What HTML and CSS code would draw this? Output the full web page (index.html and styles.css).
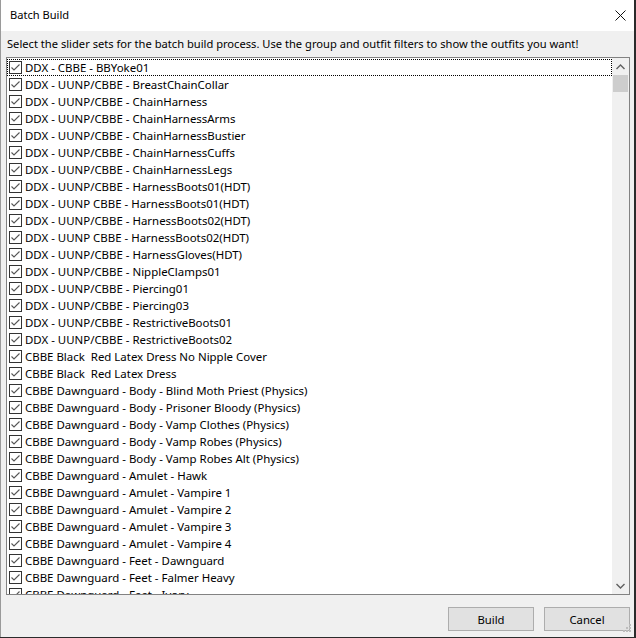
FILE: index.html
```html
<!DOCTYPE html>
<html>
<head>
<meta charset="utf-8">
<link rel="stylesheet" href="styles.css">
</head>
<body>
<div class="window">
  <div class="titlebar">
    <span class="title">Batch Build</span>
    <span class="close"><svg width="11" height="11" viewBox="0 0 11 11"><path d="M0.5 0.5L10.5 10.5M10.5 0.5L0.5 10.5" stroke="#111" stroke-width="1" fill="none"/></svg></span>
  </div>
  <div class="client">
    <div class="intro">Select the slider sets for the batch build process. Use the group and outfit filters to show the outfits you want!</div>
    <div class="listbox">
      <div class="rows" id="rows"></div>
      <div class="scrollbar">
        <div class="arrow"><svg width="9" height="6" viewBox="0 0 9 6"><path d="M0.5 5L4.5 1L8.5 5" stroke="#606060" stroke-width="1.4" fill="none"/></svg></div>
        <div class="thumb"></div>
        <div class="track"></div>
        <div class="arrow"><svg width="9" height="6" viewBox="0 0 9 6"><path d="M0.5 1L4.5 5L8.5 1" stroke="#606060" stroke-width="1.4" fill="none"/></svg></div>
      </div>
    </div>
    <div class="footer">
      <button class="btn">Build</button>
      <button class="btn">Cancel</button>
    </div>
  </div>
  <svg class="grip" width="12" height="12" viewBox="0 0 12 12">
    <rect x="9" y="0" width="2" height="2" fill="#bdbdbd"/>
    <rect x="6" y="3" width="2" height="2" fill="#bdbdbd"/>
    <rect x="9" y="3" width="2" height="2" fill="#bdbdbd"/>
    <rect x="3" y="6" width="2" height="2" fill="#bdbdbd"/>
    <rect x="6" y="6" width="2" height="2" fill="#bdbdbd"/>
    <rect x="9" y="6" width="2" height="2" fill="#bdbdbd"/>
  </svg>
</div>
<script src="script.js"></script>
</body>
</html>
```
FILE: script.js
```js
var items = [
"DDX - CBBE - BBYoke01",
"DDX - UUNP/CBBE - BreastChainCollar",
"DDX - UUNP/CBBE - ChainHarness",
"DDX - UUNP/CBBE - ChainHarnessArms",
"DDX - UUNP/CBBE - ChainHarnessBustier",
"DDX - UUNP/CBBE - ChainHarnessCuffs",
"DDX - UUNP/CBBE - ChainHarnessLegs",
"DDX - UUNP/CBBE - HarnessBoots01(HDT)",
"DDX - UUNP CBBE - HarnessBoots01(HDT)",
"DDX - UUNP/CBBE - HarnessBoots02(HDT)",
"DDX - UUNP CBBE - HarnessBoots02(HDT)",
"DDX - UUNP/CBBE - HarnessGloves(HDT)",
"DDX - UUNP/CBBE - NippleClamps01",
"DDX - UUNP/CBBE - Piercing01",
"DDX - UUNP/CBBE - Piercing03",
"DDX - UUNP/CBBE - RestrictiveBoots01",
"DDX - UUNP/CBBE - RestrictiveBoots02",
"CBBE Black  Red Latex Dress No Nipple Cover",
"CBBE Black  Red Latex Dress",
"CBBE Dawnguard - Body - Blind Moth Priest (Physics)",
"CBBE Dawnguard - Body - Prisoner Bloody (Physics)",
"CBBE Dawnguard - Body - Vamp Clothes (Physics)",
"CBBE Dawnguard - Body - Vamp Robes (Physics)",
"CBBE Dawnguard - Body - Vamp Robes Alt (Physics)",
"CBBE Dawnguard - Amulet - Hawk",
"CBBE Dawnguard - Amulet - Vampire 1",
"CBBE Dawnguard - Amulet - Vampire 2",
"CBBE Dawnguard - Amulet - Vampire 3",
"CBBE Dawnguard - Amulet - Vampire 4",
"CBBE Dawnguard - Feet - Dawnguard",
"CBBE Dawnguard - Feet - Falmer Heavy",
"CBBE Dawnguard - Feet - Ivory"
];
var box = '<svg class="cb" width="13" height="13" viewBox="0 0 13 13"><rect x="0.5" y="0.5" width="12" height="12" fill="#fff" stroke="#333"/><path d="M2.5 6.5L5 9L10.5 3.5" stroke="#555" stroke-width="1.1" fill="none"/></svg>';
var rows = document.getElementById("rows");
items.forEach(function (t, i) {
  var r = document.createElement("div");
  r.className = "row" + (i === 0 ? " focus" : "");
  r.innerHTML = box + '<span class="label"></span>';
  r.querySelector(".label").textContent = t;
  rows.appendChild(r);
});
```
FILE: styles.css
```css
html, body {
  margin: 0;
  padding: 0;
  background: #2b2b2b;
}
body {
  width: 636px;
  height: 638px;
  overflow: hidden;
  font-family: "Noto Sans", "Open Sans", sans-serif;
  font-size: 11.45px;
  color: #000;
}
.window {
  position: relative;
  width: 634px;
  height: 637px;
  box-sizing: border-box;
  border-left: 1px solid #9a9a9a;
  background: #f0f0f0;
  display: flex;
  flex-direction: column;
}
.titlebar {
  height: 31px;
  background: #fff;
  display: flex;
  align-items: center;
  justify-content: space-between;
  padding-left: 9px;
  flex: none;
}
.title {
  font-size: 11.1px;
  line-height: 16px;
  margin-top: -1px;
}
.close {
  width: 19px;
  display: flex;
  justify-content: flex-start;
  align-items: center;
  margin-top: -1px;
}
.client {
  flex: 1;
  display: flex;
  flex-direction: column;
  padding: 0 4px 0 5px;
}
.intro {
  margin-top: 5px;
  height: 16px;
  line-height: 16px;
  padding-left: 1px;
  white-space: nowrap;
  font-size: 11.15px;
}
.listbox {
  margin-top: 5px;
  width: 624px;
  height: 538px;
  box-sizing: border-box;
  border: 1px solid #828282;
  background: #fff;
  display: flex;
  overflow: hidden;
}
.rows {
  flex: 1;
  padding-top: 1px;
  overflow: hidden;
}
.row {
  height: 17px;
  box-sizing: border-box;
  display: flex;
  align-items: center;
  padding-left: 1px;
  white-space: pre;
  border: 1px dotted transparent;
}
.row.focus {
  border: 1px dotted #000;
}
.cb {
  flex: none;
  margin-right: 3px;
}
.label {
  line-height: 15px;
}
.scrollbar {
  width: 17px;
  flex: none;
  background: #f0f0f0;
  display: flex;
  flex-direction: column;
  align-items: center;
}
.arrow {
  height: 17px;
  width: 17px;
  display: flex;
  align-items: center;
  justify-content: center;
}
.thumb {
  width: 15px;
  height: 17px;
  background: #cdcdcd;
}
.track {
  flex: 1;
}
.footer {
  display: flex;
  justify-content: flex-end;
  gap: 10px;
  margin-top: 12px;
}
.btn {
  width: 86px;
  height: 24px;
  box-sizing: border-box;
  border: 1px solid #adadad;
  background: #e1e1e1;
  font-family: "Noto Sans", "Open Sans", sans-serif;
  font-size: 11.3px;
  color: #000;
  padding: 0;
  margin: 0;
}
.grip {
  position: absolute;
  right: 2px;
  bottom: 1px;
}
```
